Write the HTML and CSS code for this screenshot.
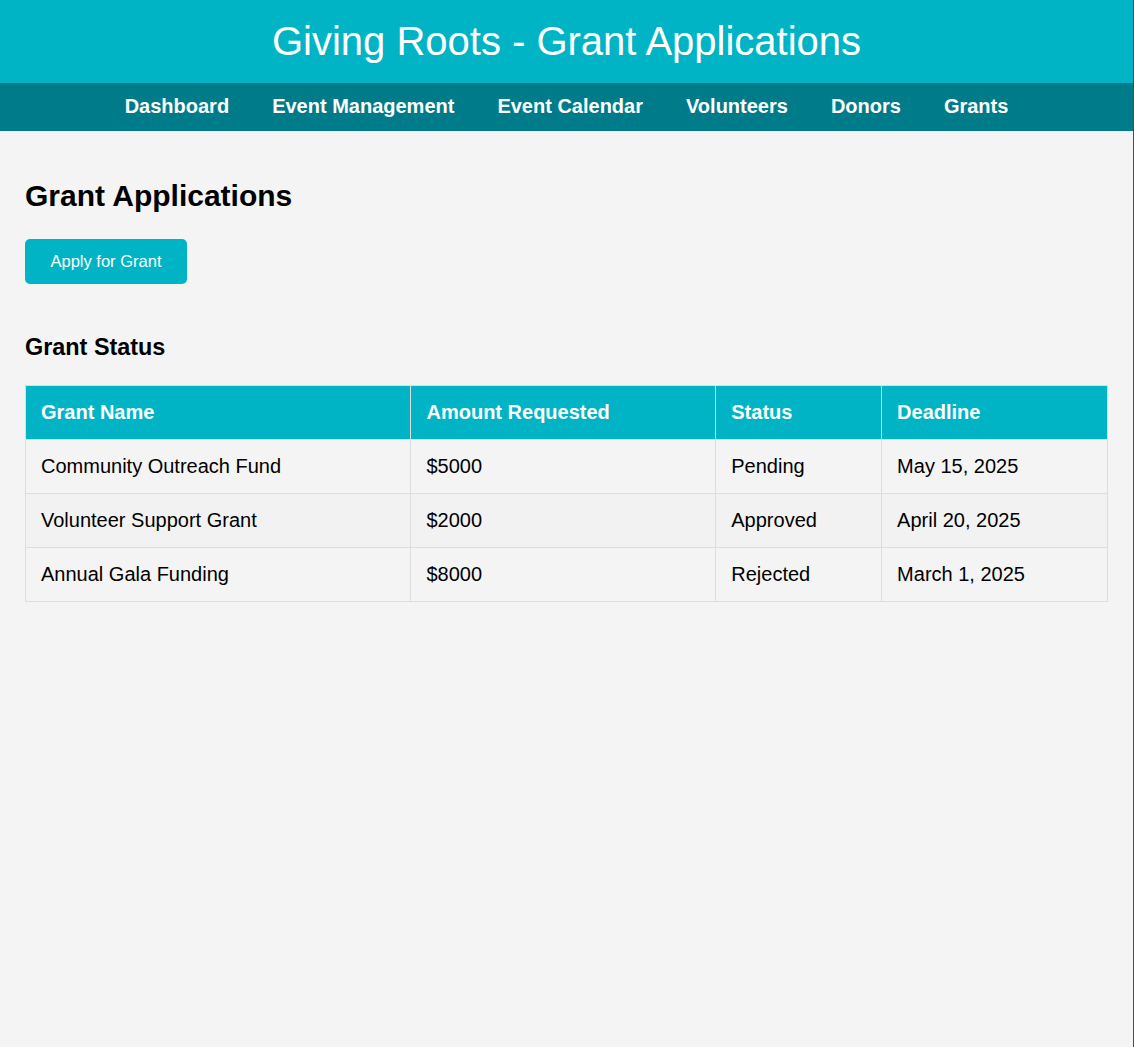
FILE: index.html
```html
<!DOCTYPE html>
<html lang="en">
<head>
<meta charset="utf-8">
<title>Giving Roots - Grant Applications</title>
<link rel="stylesheet" href="styles.css">
</head>
<body>
<header class="site-header">
  <h1 class="site-title">Giving Roots - Grant Applications</h1>
</header>
<nav class="main-nav">
  <a href="#">Dashboard</a>
  <a href="#">Event Management</a>
  <a href="#">Event Calendar</a>
  <a href="#">Volunteers</a>
  <a href="#">Donors</a>
  <a href="#">Grants</a>
</nav>
<main class="content">
  <h2 class="page-title">Grant Applications</h2>
  <button class="btn-primary" type="button">Apply for Grant</button>
  <h3 class="section-title">Grant Status</h3>
  <table class="grant-table">
    <thead>
      <tr><th>Grant Name</th><th>Amount Requested</th><th>Status</th><th>Deadline</th></tr>
    </thead>
    <tbody>
      <tr><td>Community Outreach Fund</td><td>$5000</td><td>Pending</td><td>May 15, 2025</td></tr>
      <tr><td>Volunteer Support Grant</td><td>$2000</td><td>Approved</td><td>April 20, 2025</td></tr>
      <tr><td>Annual Gala Funding</td><td>$8000</td><td>Rejected</td><td>March 1, 2025</td></tr>
    </tbody>
  </table>
</main>
</body>
</html>
```

FILE: styles.css
```css
html {
  border-right: 1px solid #4a4a5c;
  min-height: 100%;
  background: #f4f4f4;
}
body {
  margin: 0;
  font-family: Arial, "Liberation Sans", sans-serif;
  font-size: 20px;
  background: #f4f4f4;
  color: #000;
}
.site-header {
  background: #00b4c6;
  color: #fff;
  text-align: center;
  padding: 18px 0;
}
.site-title {
  margin: 0;
  font-size: 40px;
  font-weight: normal;
  line-height: 47px;
}
.main-nav {
  background: #007b8a;
  display: flex;
  justify-content: center;
  gap: 43px;
  padding: 11px 0 13px;
}
.main-nav a {
  color: #fff;
  text-decoration: none;
  font-weight: bold;
  font-size: 20px;
  line-height: 24px;
}
.content {
  padding: 48px 25px 20px;
}
.page-title {
  font-size: 30px;
  line-height: 34px;
  margin: 0 0 26px;
}
.btn-primary {
  display: block;
  background: #00b4c6;
  color: #fff;
  border: none;
  border-radius: 5px;
  font-family: inherit;
  font-size: 16.5px;
  line-height: 19px;
  padding: 13px 25.5px;
  cursor: pointer;
}
.section-title {
  font-size: 23.4px;
  line-height: 27px;
  margin: 50px 0 24px;
}
.grant-table {
  width: 100%;
  border-collapse: collapse;
  font-size: 20px;
}
.grant-table th,
.grant-table td {
  border: 1px solid #dddddd;
  padding: 15px;
  text-align: left;
  line-height: 23px;
}
.grant-table th {
  background: #00b4c6;
  color: #fff;
}
.grant-table tbody tr:nth-child(even) {
  background: #f2f2f2;
}
```
